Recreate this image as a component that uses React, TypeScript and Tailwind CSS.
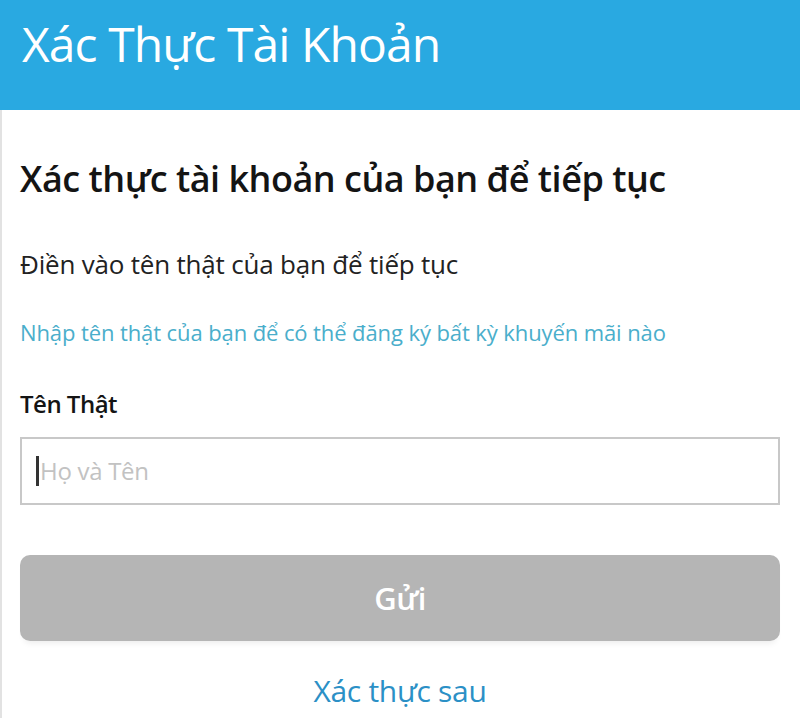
export default function App() {
  return (
    <div className="min-h-screen bg-white font-['Open_Sans','Noto_Sans',sans-serif]">
      <header className="h-[110px] bg-[#29a9e1] pl-[22px] pt-[14px]">
        <h1 className="text-[48px] leading-[60px] font-medium text-white tracking-[-0.9px]">Xác Thực Tài Khoản</h1>
      </header>

      <main className="min-h-[608px] border-l-[2px] border-[#e2e2e2] pl-[18px] pr-[20px] pt-[47px]">
        <h2 className="text-[36px] leading-[44px] font-semibold text-[#141414] tracking-[-0.5px]">
          Xác thực tài khoản của bạn để tiếp tục
        </h2>

        <p className="mt-[49px] text-[26px] leading-[28px] text-[#222] tracking-[-0.2px]">
          Điền vào tên thật của bạn để tiếp tục
        </p>

        <p className="mt-[40px] text-[22px] leading-[28px] text-[#4aaecb] tracking-[-0.1px]">
          Nhập tên thật của bạn để có thể đăng ký bất kỳ khuyến mãi nào
        </p>

        <label className="block mt-[43px] text-[24px] leading-[30px] font-semibold text-[#141414] tracking-[-0.5px]">
          Tên Thật
        </label>

        <div className="mt-[18px] h-[68px] border-2 border-[#c8c8c8] flex items-center pl-[14px]">
          <span className="w-[3px] h-[30px] bg-[#333] mr-[1px]" />
          <span className="text-[24px] text-[#c2c2c2] tracking-[-0.3px]">Họ và Tên</span>
        </div>

        <button className="mt-[50px] w-full h-[86px] rounded-[10px] bg-[#b5b5b5] text-white text-[31px] font-semibold tracking-[-0.5px] shadow-[0_6px_6px_-4px_rgba(0,0,0,0.08)]">
          Gửi
        </button>

        <div className="mt-[32px] text-center text-[30px] leading-[36px] text-[#2b90c6] tracking-[-0.3px]">
          Xác thực sau
        </div>
      </main>
    </div>
  );
}
